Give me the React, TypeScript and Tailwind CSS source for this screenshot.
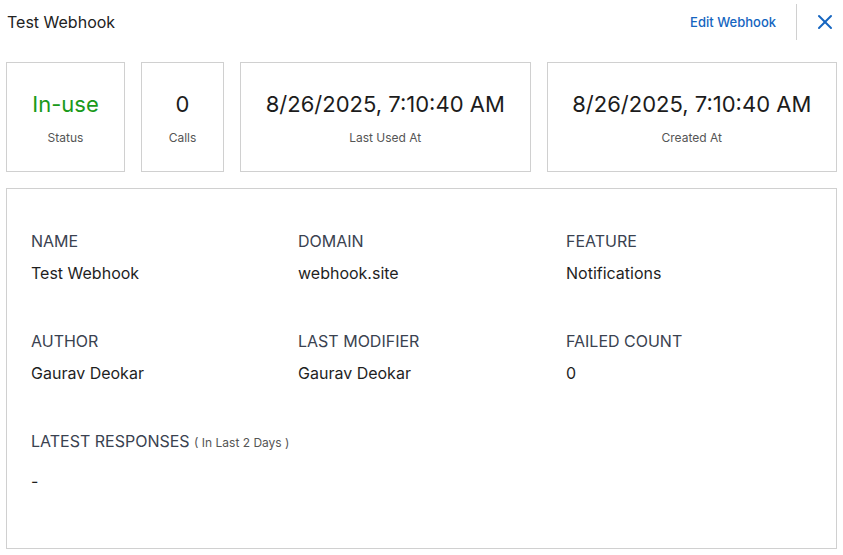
import { X } from "lucide-react";

const font = { fontFamily: "Inter, 'Noto Sans', sans-serif" };

function StatCard({
  value,
  label,
  className,
  valueClass,
}: {
  value: string;
  label: string;
  className?: string;
  valueClass?: string;
}) {
  return (
    <div
      className={`flex h-[110px] flex-col items-center justify-center border border-[#d0d0d0] pt-[2px] ${className ?? ""}`}
    >
      <div className={`text-[22px] leading-7 ${valueClass ?? "text-[#1c1c1c]"}`}>
        {value}
      </div>
      <div className="mt-[12px] text-xs leading-4 text-[#555]">{label}</div>
    </div>
  );
}

function Field({ label, value }: { label: string; value: string }) {
  return (
    <div className="flex flex-col gap-2">
      <div className="text-base leading-6 text-[#3a4250]">{label}</div>
      <div className="text-base leading-6 text-[#1f1f1f]">{value}</div>
    </div>
  );
}

export default function App() {
  return (
    <div
      style={font}
      className="flex h-[555px] w-[843px] flex-col bg-white px-[6px] pb-[6px]"
    >
      <header className="flex h-11 items-center justify-between pl-px">
        <h1 className="text-base text-[#222]">Test Webhook</h1>
        <div className="flex h-full items-center">
          <button className="pt-[2px] text-[13px] font-medium text-[#1565c0]">
            Edit Webhook
          </button>
          <div className="ml-5 h-9 w-px bg-[#d0d0d0]" />
          <button className="ml-4 text-[#1565c0]">
            <X className="size-6" strokeWidth={2} />
          </button>
        </div>
      </header>

      <div className="mt-[18px] flex gap-4">
        <StatCard
          value="In-use"
          label="Status"
          className="w-[119px]"
          valueClass="text-[#1a9a1a]"
        />
        <StatCard value="0" label="Calls" className="w-[83px]" />
        <StatCard
          value="8/26/2025, 7:10:40 AM"
          label="Last Used At"
          className="flex-1"
        />
        <StatCard
          value="8/26/2025, 7:10:40 AM"
          label="Created At"
          className="flex-1"
        />
      </div>

      <section className="mt-4 flex-1 border border-[#d0d0d0] px-6 pt-10">
        <div className="grid grid-cols-[267px_268px_1fr] gap-y-11">
          <Field label="NAME" value="Test Webhook" />
          <Field label="DOMAIN" value="webhook.site" />
          <Field label="FEATURE" value="Notifications" />
          <Field label="AUTHOR" value="Gaurav Deokar" />
          <Field label="LAST MODIFIER" value="Gaurav Deokar" />
          <Field label="FAILED COUNT" value="0" />
        </div>
        <div className="mt-11 flex flex-col gap-4">
          <div className="text-base leading-6 text-[#3a4250]">
            LATEST RESPONSES{" "}
            <span className="text-xs text-[#555]">( In Last 2 Days )</span>
          </div>
          <div className="text-base leading-6 text-[#1f1f1f]">-</div>
        </div>
      </section>
    </div>
  );
}
